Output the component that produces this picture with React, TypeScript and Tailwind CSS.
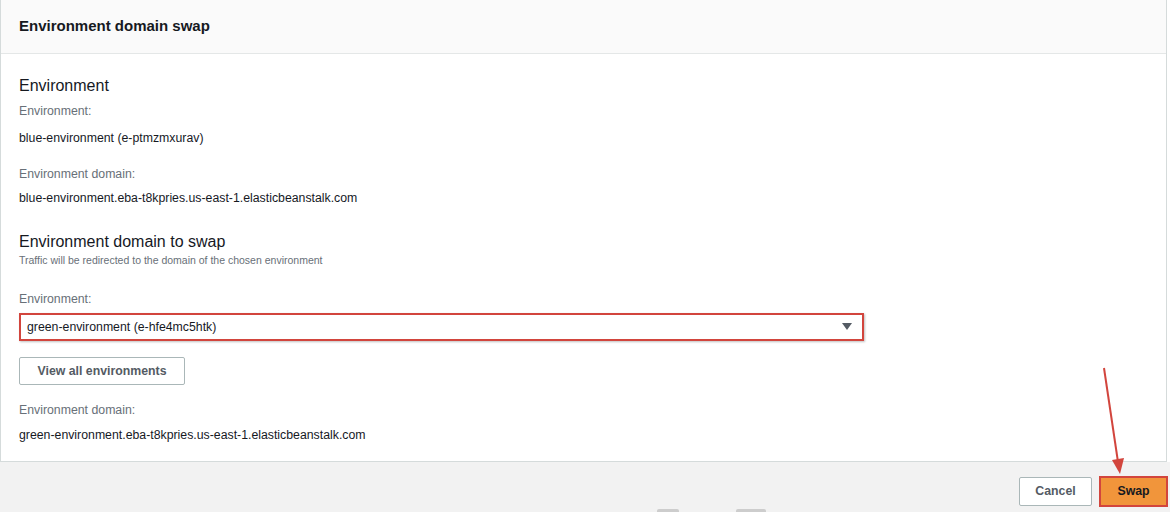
export default function App() {
  return (
    <div
      className="relative w-[1170px] h-[512px] bg-white text-[#16191f] overflow-hidden"
      style={{ fontFamily: '"Liberation Sans", Arial, sans-serif' }}
    >
      {/* card */}
      <div className="w-[1167px] h-[462px] border-l border-r border-b border-[#d5dbdb] bg-white flex flex-col">
        <div className="h-[54px] bg-[#fafafa] border-b border-[#e4e7e7] flex items-center pl-[18px]">
          <h2 className="text-[15px] font-bold">Environment domain swap</h2>
        </div>

        <div className="px-[18px] pt-[21px]">
          <h3 className="text-[16px] leading-[22px]">Environment</h3>
          <p className="mt-[5px] text-[12.3px] text-[#687078]">Environment:</p>
          <p className="mt-[9px] text-[12.3px]">blue-environment (e-ptmzmxurav)</p>
          <p className="mt-[17px] text-[12.3px] text-[#687078]">Environment domain:</p>
          <p className="mt-[6px] text-[12.3px]">blue-environment.eba-t8kpries.us-east-1.elasticbeanstalk.com</p>

          <h3 className="mt-[23px] text-[16px] leading-[22px]">Environment domain to swap</h3>
          <p className="text-[10.5px] leading-[14px] text-[#687078]">Traffic will be redirected to the domain of the chosen environment</p>

          <p className="mt-[23px] text-[12.3px] text-[#687078]">Environment:</p>
          <div className="mt-[5px] w-[845px] h-[28px] border-2 border-[#d2453d] flex items-center justify-between pl-[6px] pr-[10px] shadow-[1px_1px_2px_rgba(0,0,0,0.25)]">
            <span className="text-[12.3px]">green-environment (e-hfe4mc5htk)</span>
            <svg width="10" height="8" viewBox="0 0 10 8">
              <path d="M0 0 L10 0 L5 7 Z" fill="#545b64" />
            </svg>
          </div>

          <button className="mt-[16px] w-[166px] h-[28px] border border-[#aab7b8] rounded-[2px] text-[12.3px] font-bold text-[#545b64] bg-white">
            View all environments
          </button>

          <p className="mt-[16px] text-[12.3px] text-[#687078]">Environment domain:</p>
          <p className="mt-[6px] text-[12.3px]">green-environment.eba-t8kpries.us-east-1.elasticbeanstalk.com</p>
        </div>
      </div>

      {/* footer */}
      <div className="h-[50px] bg-[#f2f2f2] flex items-start justify-end gap-[7px] pt-[15px] pr-[2px]">
        <button className="w-[73px] h-[29px] border border-[#aab7b8] rounded-[2px] bg-white text-[12.3px] font-bold text-[#545b64]">
          Cancel
        </button>
        <button className="w-[69px] h-[31px] -mt-[1px] border-2 border-[#d2453d] bg-[#f1953b] text-[12.3px] font-bold text-[#16191f]">
          Swap
        </button>
      </div>

      {/* bottom scroll hints */}
      <div className="absolute left-[657px] bottom-0 w-[22px] h-[3px] bg-[#cdcdcd] rounded-t-[2px]" />
      <div className="absolute left-[736px] bottom-0 w-[30px] h-[3px] bg-[#cdcdcd] rounded-t-[2px]" />

      {/* annotation arrow */}
      <svg className="absolute left-0 top-0 pointer-events-none" width="1170" height="512">
        <line x1="1104" y1="368" x2="1118" y2="462" stroke="#d2453d" strokeWidth="2" />
        <path d="M1112 460 L1124 458 L1120 474 Z" fill="#d2453d" />
      </svg>
    </div>
  );
}
